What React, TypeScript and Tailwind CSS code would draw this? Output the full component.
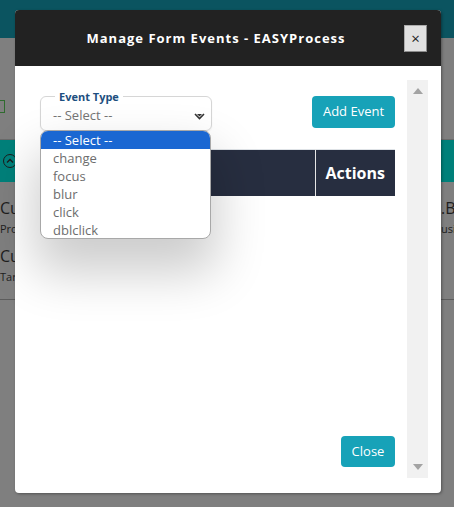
import React from "react";

const options = ["change", "focus", "blur", "click", "dblclick"];

const Backdrop = () => {
  return (
    <div className="absolute inset-0 flex flex-col bg-[#7f7f7f]">
      <div className="h-[38px] bg-[#0b5460]" />
      <div className="h-[101px] relative">
        <div className="absolute left-[-6px] top-[62px] w-[11px] h-[13px] border border-[#2f6b2f]" />
      </div>
      <div className="h-[1px] bg-[#6a6a6a]" />
      <div className="h-[42px] bg-[#00807a] flex items-center">
        <div className="ml-[3px] w-[14px] h-[14px] rounded-full border-[1.5px] border-[#1c1c1c] flex items-center justify-center">
          <svg width="8" height="6" viewBox="0 0 8 6">
            <path d="M1 4.5 L4 1.5 L7 4.5" fill="none" stroke="#1c1c1c" strokeWidth="1.4" />
          </svg>
        </div>
      </div>
      <div className="flex justify-between h-[118px] border-b border-[#5c5c5c] text-[#1e1e1e] font-['Open_Sans',sans-serif]">
        <div className="flex flex-col pt-[16px]">
          <span className="text-[16px] leading-[20px]">Cu</span>
          <span className="text-[11px] leading-[14px] mt-[4px]">Pro</span>
          <span className="text-[16px] leading-[20px] mt-[10px]">Cu</span>
          <span className="text-[11px] leading-[14px] mt-[4px]">Targ</span>
        </div>
        <div className="flex flex-col pt-[16px] w-[13px] overflow-hidden">
          <span className="text-[16px] leading-[20px] whitespace-nowrap">.Bu</span>
          <span className="text-[11px] leading-[14px] mt-[4px] whitespace-nowrap">usin</span>
        </div>
      </div>
    </div>
  );
};

const App = () => {
  return (
    <div className="relative w-[454px] h-[507px] overflow-hidden font-['Open_Sans','Noto_Sans',sans-serif]">
      <Backdrop />
      <div className="absolute left-[15px] top-[10px] w-[426px] h-[483px] bg-white rounded-[4px] shadow-[1px_1px_3px_rgba(0,0,0,0.35)] flex flex-col">
        <div className="h-[56px] bg-[#222222] rounded-t-[4px] flex items-center pl-[13px] pr-[14px]">
          <h2 className="flex-1 text-center text-white text-[13px] font-bold tracking-[1px] leading-none">
            Manage Form Events - EASYProcess
          </h2>
          <button className="w-[23px] h-[27px] bg-[#e1e1e1] border border-[#adadad] border-r-[#8c8c8c] border-b-[#8c8c8c] flex items-center justify-center text-[#222] text-[15px] leading-none">
            ×
          </button>
        </div>
        <div className="flex-1 flex pt-[14px] pb-[15px] pl-[25px] pr-[13px] gap-[12px]">
          <div className="flex-1 flex flex-col">
            <div className="flex justify-between items-start pt-[10px]">
              <div className="relative">
                <fieldset className="w-[172px] h-[41px] border border-[#d6d6d6] rounded-[6px] px-[12px] shadow-[0_1px_2px_rgba(0,0,0,0.06)]">
                  <legend className="ml-[2px] px-[4px] text-[11px] font-bold text-[#1d4f80] leading-[13px]">
                    Event Type
                  </legend>
                  <div className="flex items-center justify-between h-[22px] mt-[2px]">
                    <span className="text-[13px] text-[#757575]">-- Select --</span>
                    <svg width="11" height="7" viewBox="0 0 11 7" className="mr-[-6px]">
                      <path d="M1 1 L5.5 5.5 L10 1" fill="none" stroke="#333" strokeWidth="1.6" />
                      <path d="M3 1 L8 1 L5.5 3.5 Z" fill="#333" />
                    </svg>
                  </div>
                </fieldset>
                <ul className="absolute left-0 top-[40px] w-[171px] h-[109px] bg-white border border-[#a8a8a8] rounded-[8px] overflow-hidden z-10 shadow-[0_28px_50px_6px_rgba(0,0,0,0.2)]">
                  <li className="h-[18px] bg-[#1a67d2] text-white text-[13px] leading-[18px] pl-[12px]">
                    -- Select --
                  </li>
                  {options.map((o) => (
                    <li key={o} className="h-[18px] text-[#6d6d6d] text-[13px] leading-[18px] pl-[12px]">
                      {o}
                    </li>
                  ))}
                </ul>
              </div>
              <button className="mt-[6px] w-[83px] h-[32px] bg-[#17a2b8] rounded-[4px] text-white text-[13px]">
                Add Event
              </button>
            </div>
            <table className="mt-[18px] w-full border-collapse">
              <thead>
                <tr className="h-[46px] bg-[#272e40] border-t border-[#dee2e6]">
                  <th className="border-r border-[#e5e5e5]" />
                  <th className="w-[80px] text-left pl-[10px] text-white text-[16px] font-bold">Actions</th>
                </tr>
              </thead>
            </table>
            <div className="flex-1" />
            <div className="flex justify-end mb-[11px]">
              <button className="w-[54px] h-[31px] bg-[#17a2b8] rounded-[4px] text-white text-[13px]">
                Close
              </button>
            </div>
          </div>
          <div className="w-[21px] bg-[#f1f1f1] flex flex-col items-center justify-between py-[8px]">
            <svg width="10" height="6" viewBox="0 0 10 6">
              <path d="M0 6 L5 0 L10 6 Z" fill="#a3a3a3" />
            </svg>
            <svg width="10" height="6" viewBox="0 0 10 6">
              <path d="M0 0 L10 0 L5 6 Z" fill="#a3a3a3" />
            </svg>
          </div>
        </div>
      </div>
    </div>
  );
};

export default App;
